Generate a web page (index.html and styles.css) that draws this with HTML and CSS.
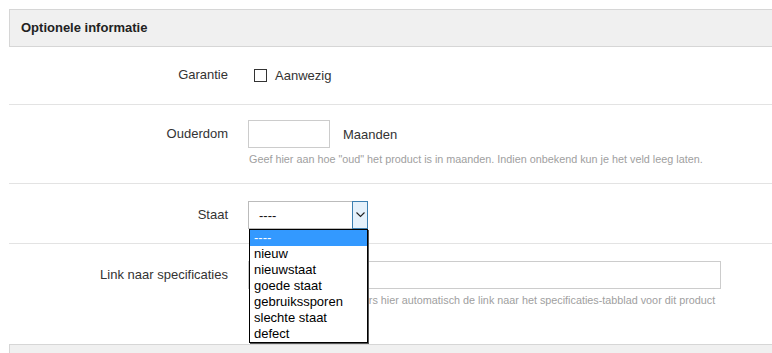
FILE: index.html
```html
<!DOCTYPE html>
<html lang="nl">
<head>
    <meta charset="UTF-8">
    <title>Optionele informatie</title>
    <link rel="stylesheet" href="styles.css">
</head>
<body>
    <div class="section">
        <div class="section-head">Optionele informatie</div>

        <div class="form-row row-garantie">
            <div class="form-label">Garantie</div>
            <div class="form-field">
                <label class="check"><span class="check-box"></span>Aanwezig</label>
            </div>
        </div>

        <div class="form-row row-ouderdom">
            <div class="form-label">Ouderdom</div>
            <div class="form-field">
                <div class="inline">
                    <input type="text" class="text-input small">
                    <span class="unit">Maanden</span>
                </div>
                <p class="help">Geef hier aan hoe "oud" het product is in maanden. Indien onbekend kun je het veld leeg laten.</p>
            </div>
        </div>

        <div class="form-row row-staat">
            <div class="form-label">Staat</div>
            <div class="form-field">
                <div class="select">
                    <span class="select-value">----</span>
                    <span class="select-arrow">
                        <svg width="9" height="6" viewBox="0 0 9 6"><path d="M0.5 0.5 L4.5 4.5 L8.5 0.5" fill="none" stroke="#222" stroke-width="1.1"/></svg>
                    </span>
                    <ul class="select-list">
                        <li class="active">----</li>
                        <li>nieuw</li>
                        <li>nieuwstaat</li>
                        <li>goede staat</li>
                        <li>gebruikssporen</li>
                        <li>slechte staat</li>
                        <li>defect</li>
                    </ul>
                </div>
            </div>
        </div>

        <div class="form-row row-link">
            <div class="form-label">Link naar specificaties</div>
            <div class="form-field">
                <input type="text" class="text-input wide">
                <p class="help">Indien leeg toont Tweakers hier automatisch de link naar het specificaties-tabblad voor dit product</p>
            </div>
        </div>

        <div class="section-foot"></div>
    </div>
</body>
</html>
```

FILE: styles.css
```css
body {
    margin: 0;
    padding: 9px 0 0 9px;
    font-family: 'Liberation Sans', Arial, sans-serif;
    font-size: 13px;
    color: #333;
    background-color: #fff;
    overflow: hidden;
}
.section-head {
    height: 36px;
    line-height: 36px;
    padding-left: 11px;
    background-color: #f0f0f0;
    border: 1px solid #d6d6d6;
    border-right: none;
    font-weight: bold;
    color: #222;
}
.form-row {
    display: grid;
    grid-template-columns: 219px 1fr;
    column-gap: 20px;
    border-bottom: 1px solid #e3e3e3;
}
.row-garantie {
    padding: 14px 0 15px;
}
.row-ouderdom {
    padding: 15px 0 17px;
}
.row-staat {
    padding: 17px 0 14px;
}
.row-link {
    padding: 17px 0 37px;
    border-bottom: none;
}
.form-label {
    text-align: right;
    line-height: 28px;
}
.form-field {
    min-height: 28px;
}
.check {
    display: flex;
    align-items: center;
    height: 28px;
}
.check-box {
    width: 11px;
    height: 11px;
    border: 1px solid #333;
    margin: 0 8px 0 6px;
}
.inline {
    display: flex;
    align-items: center;
}
.text-input {
    box-sizing: border-box;
    height: 28px;
    border: 1px solid #ccc;
    margin: 0;
    padding: 0 5px;
    font: inherit;
}
.small {
    width: 82px;
}
.wide {
    width: 473px;
    display: block;
}
.unit {
    margin-left: 13px;
}
.help {
    margin: 4px 0 0 1px;
    font-size: 10.8px;
    line-height: 14px;
    color: #a0a0a0;
}
.select {
    position: relative;
    box-sizing: border-box;
    width: 120px;
    height: 28px;
    border: 1px solid #bbb;
    display: flex;
    align-items: center;
}
.select-value {
    flex: 1;
    padding-left: 10px;
    color: #111;
}
.select-arrow {
    box-sizing: border-box;
    width: 16px;
    height: 28px;
    margin: -1px -1px -1px 0;
    border: 1px solid #3c7fb1;
    background-color: #e5f1fb;
    display: flex;
    align-items: center;
    justify-content: center;
}
.select-list {
    position: absolute;
    top: 27px;
    left: 0;
    width: 117px;
    margin: 0;
    padding: 0;
    list-style: none;
    background-color: #fff;
    border: 1px solid #000;
    box-shadow: 1px 1px 0 #555;
    z-index: 2;
}
.select-list li {
    height: 16px;
    line-height: 16px;
    padding-left: 4px;
    color: #000;
}
.select-list .active {
    background-color: #3399ff;
    color: #fff;
}
.section-foot {
    height: 20px;
    background-color: #f0f0f0;
    border-top: 1px solid #d6d6d6;
    border-left: 1px solid #d6d6d6;
}
```
